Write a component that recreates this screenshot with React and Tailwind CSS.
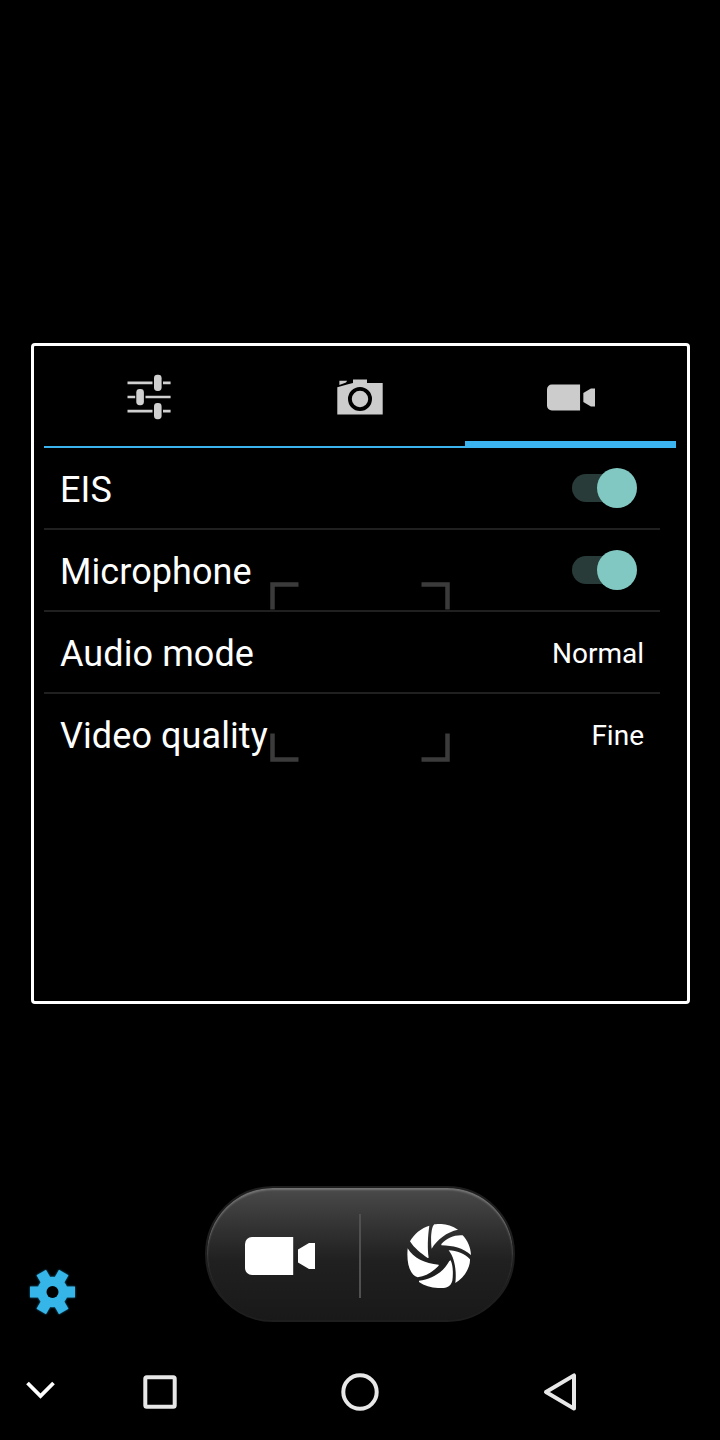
import { useState } from 'react';

const SlidersIcon = () => (
  <svg width="44" height="46" viewBox="0 0 44 46" fill="#d0d0d0">
    <path d="M.5 7.600h25v2.600h-25zM36 7.600h7.6v2.600H36zM.5 21.700h7.7v2.600H.5zM18.5 21.700h25.1v2.600H18.5zM.5 35.800h25v2.600h-25zM36 35.800h7.6v2.600H36z" />
    <rect x="27" y=".8" width="7.6" height="16.2" rx="3.4" />
    <rect x="9.3" y="15" width="7.6" height="16.2" rx="3.4" />
    <rect x="27" y="29" width="7.6" height="16.2" rx="3.4" />
  </svg>
);

const PhotoIcon = () => (
  <svg width="46" height="36" viewBox="0 0 46 36" fill="#cccccc">
    <path d="M.3 8.2 11 5.2 16 4V.6h14V4h15.700v31.500H.3z" />
    <path d="M2.4 1.800h7.8L9 3.600 2.4 6z" />
    <circle cx="23" cy="20" r="10.1" fill="none" stroke="#000" strokeWidth="3.8" />
  </svg>
);

const VideoIcon = ({ className }) => (
  <svg viewBox="0 0 70 38" className={className} fill="currentColor">
    <path d="M7 0h41.200v38H7a7 7 0 0 1-7-7V7a7 7 0 0 1 7-7z" />
    <path d="M64 6h6v26h-6l-11-6.500v-13z" />
  </svg>
);

const ShutterIcon = () => (
  <svg width="64" height="64" viewBox="36 42 192 192" fill="#fff">
    <path d="M103 47C80 53 57 72 45 94C58 115 78 130 98 144L101 143C97 115 98 80 103 47z" />
    <path d="M118 43C137 40 165 42 189 59C155 66 127 88 110 116C107 95 107 52 118 43z" />
    <path d="M139 102C156 83 180 74 203 76C218 92 227 112 228 135C203 114 175 107 139 106z" />
    <path d="M161 121C185 121 210 132 225 148C226 175 205 205 181 219C185 185 180 145 161 121z" />
    <path d="M167 151C174 165 175 190 172 212C168 228 155 234 140 234C115 235 90 229 72 216V212C110 208 145 187 163 153z" />
    <path d="M38 115C55 144 90 161 131 164V167C115 184 95 198 68 202C44 194 34 160 38 115z" />
  </svg>
);

const GearIcon = () => (
  <svg width="46" height="46" viewBox="-70.500 -69 138 138" className="drop-shadow-[0_0_1px_#1b6f95]">
    <g fill="#35b5e8">
      <circle r="46" />
      <rect x="-67.500" y="-16.500" width="135" height="33" />
      <rect x="-67.500" y="-16.500" width="135" height="33" transform="rotate(60)" />
      <rect x="-67.500" y="-16.500" width="135" height="33" transform="rotate(120)" />
    </g>
    <circle r="18" fill="#000" />
  </svg>
);

const FocusFrame = () => (
  <svg className="absolute left-[270px] top-[582px]" width="180" height="180" fill="none" stroke="#3b3b3b" strokeWidth="4.500">
    <path d="M2.500 27.500V2.500H28.500M151.500 2.500h26V27.500M2.500 151.500v26H28.500M151.500 177.500h26v-26" />
  </svg>
);

const Switch = ({ on, onChange }) => (
  <button onClick={onChange} className="flex items-center w-[65px] h-10 mr-[7px] -mt-px">
    <span className="w-[58px] h-7 rounded-full bg-[#283b39] shrink-0"></span>
    <span className={on
      ? 'w-10 h-10 rounded-full bg-[#80c8c1] shrink-0 -ml-[33px]'
      : 'w-10 h-10 rounded-full bg-gray-400 shrink-0 -ml-[58px]'}></span>
  </button>
);

const tabs = [
  { id: 'general', icon: <SlidersIcon /> },
  { id: 'photo', icon: <PhotoIcon /> },
  { id: 'video', icon: <VideoIcon className="w-[48px] h-[27px] ml-px text-[#cccccc]" /> },
];

const rows = [
  { label: 'EIS', key: 'eis' },
  { label: 'Microphone', key: 'mic' },
  { label: 'Audio mode', value: 'Normal' },
  { label: 'Video quality', value: 'Fine' },
];

const App = () => {
  const [tab, setTab] = useState('video');
  const [settings, setSettings] = useState({ eis: true, mic: true });

  const toggle = key => setSettings(s => ({ ...s, [key]: !s[key] }));

  return (
    <div className="relative flex flex-col w-[720px] h-[1440px] pt-[343px] bg-black text-white overflow-hidden font-[Roboto,sans-serif]">
      <FocusFrame />

      <div className="w-[659px] h-[661px] ml-[31px] px-[10px] border-3 border-white rounded-[4px]">
        <div className="grid grid-cols-3 w-[632px] h-[102px]">
          {tabs.map(t => (
            <button
              key={t.id}
              onClick={() => setTab(t.id)}
              className={t.id === tab
                ? 'flex items-center justify-center pt-[7px] border-b-7 border-[#3ab3ee]'
                : 'flex items-center justify-center pt-[2px] border-b-2 border-[#3ab3ee]'}
            >
              {t.icon}
            </button>
          ))}
        </div>
        <div className="w-[616px]">
          {rows.map(r => (
            <div key={r.label} className="flex items-center justify-between h-[82px] pl-4 pr-4 border-b-2 border-[#202020] last:border-transparent">
              <span className="text-[36px] leading-[42px] tracking-[0.08px] pt-[4px]">{r.label}</span>
              {r.key
                ? <Switch on={settings[r.key]} onChange={() => toggle(r.key)} />
                : <span className="text-[28px] leading-8 pt-[3px]">{r.value}</span>
              }
            </div>
          ))}
        </div>
      </div>

      <div className="flex items-end h-[136px] mt-[182px] pl-[29px]">
        <button className="mb-[7px]"><GearIcon /></button>
        <div className="flex items-center w-[310px] h-[136px] ml-[130px] rounded-[68px] border-2 border-[#1e1e1e] bg-linear-to-b from-[#4a4a4a] via-[#202020] via-55% to-[#191919] shadow-[inset_0_2px_2px_#757575]">
          <button className="flex justify-center w-[152px] pr-[7px] pt-[3px]">
            <VideoIcon className="w-[70px] h-[38px] text-white" />
          </button>
          <span className="w-[2px] h-[84px] mt-[3px] bg-[#505050]"></span>
          <button className="flex justify-center w-[152px] pl-[4px] pt-[3px]">
            <ShutterIcon />
          </button>
        </div>
      </div>

      <div className="flex items-center h-10 mt-[50px] pl-[26px]">
        <svg width="29" height="18" viewBox="0 0 29 18" className="-mt-[5px]" fill="none" stroke="#fff" strokeWidth="3.800">
          <path d="M1.500 2 14.500 15 27.500 2" />
        </svg>
        <svg width="34" height="34" viewBox="0 0 34 34" className="ml-[88px]" fill="none" stroke="#e8e8e8" strokeWidth="4">
          <rect x="2.300" y="2.300" width="29.400" height="29.400" rx="1.500" />
        </svg>
        <svg width="38" height="38" viewBox="0 0 38 38" className="ml-[164px]" fill="none" stroke="#e8e8e8" strokeWidth="4">
          <circle cx="19" cy="19" r="16.700" />
        </svg>
        <svg width="34" height="40" viewBox="0 0 34 40" className="ml-[164px]" fill="none" stroke="#e8e8e8" strokeWidth="4" strokeLinejoin="round">
          <path d="M3 20 31 3.400v33.200z" />
        </svg>
      </div>
    </div>
  );
};

export default App;
